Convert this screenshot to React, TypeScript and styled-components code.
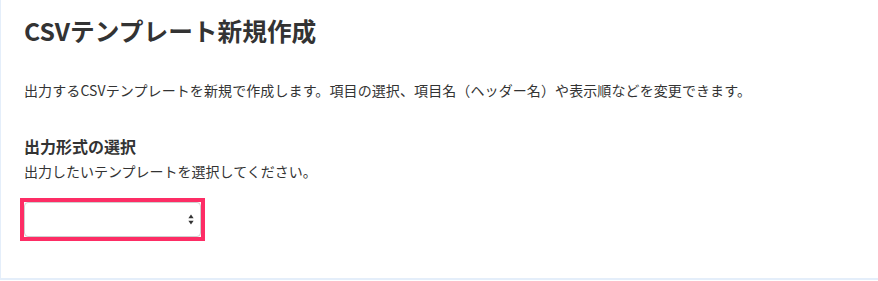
import styled, { createGlobalStyle } from 'styled-components'

const GlobalStyle = createGlobalStyle`
  html, body {
    margin: 0;
    padding: 0;
    background: #ffffff;
  }
  body {
    font-family: "Noto Sans CJK JP", "Noto Sans", "Liberation Sans", sans-serif;
    color: #333333;
  }
`

const Panel = styled.section`
  box-sizing: border-box;
  width: 878px;
  height: 280px;
  padding: 12px 0 0 23px;
  background: #ffffff;
  border-left: 1px solid #e4eefa;
  border-bottom: 2px solid #e4eefa;
`

const Title = styled.h1`
  margin: 0;
  font-size: 24.7px;
  line-height: 36px;
  font-weight: 700;
  color: #333333;
`

const Lead = styled.p`
  margin: 32px 0 0;
  font-size: 14px;
  line-height: 21px;
  letter-spacing: 0.1px;
  color: #333333;
`

const Heading = styled.h2`
  margin: 33px 0 0;
  font-size: 16px;
  line-height: 24px;
  font-weight: 700;
  color: #333333;
`

const Hint = styled.p`
  margin: 3px 0 0;
  font-size: 14px;
  line-height: 21px;
  color: #333333;
`

const Field = styled.div`
  position: relative;
  width: 177px;
  margin-top: 20px;
  outline: 4px solid #fd2d65;
`

const Select = styled.select`
  display: block;
  box-sizing: border-box;
  width: 177px;
  height: 35px;
  padding: 0 24px 0 8px;
  appearance: none;
  background: #ffffff;
  border: 1px solid #cfcfcf;
  border-radius: 4px;
  font: inherit;
  font-size: 14px;
  color: #333333;
`

const Arrows = styled.svg`
  position: absolute;
  top: 12px;
  right: 7px;
  pointer-events: none;
`

export default function App() {
  return (
    <>
      <GlobalStyle />
      <Panel>
        <Title>CSVテンプレート新規作成</Title>
        <Lead>
          出力するCSVテンプレートを新規で作成します。項目の選択、項目名（ヘッダー名）や表示順などを変更できます。
        </Lead>
        <Heading>出力形式の選択</Heading>
        <Hint>出力したいテンプレートを選択してください。</Hint>
        <Field>
          <Select defaultValue="">
            <option value=""></option>
          </Select>
          <Arrows width="6" height="11" viewBox="0 0 6 11">
            <path d="M3 0.5 L5.6 4.2 L0.4 4.2 Z" fill="#333" />
            <path d="M3 10.5 L5.6 6.8 L0.4 6.8 Z" fill="#333" />
          </Arrows>
        </Field>
      </Panel>
    </>
  )
}
